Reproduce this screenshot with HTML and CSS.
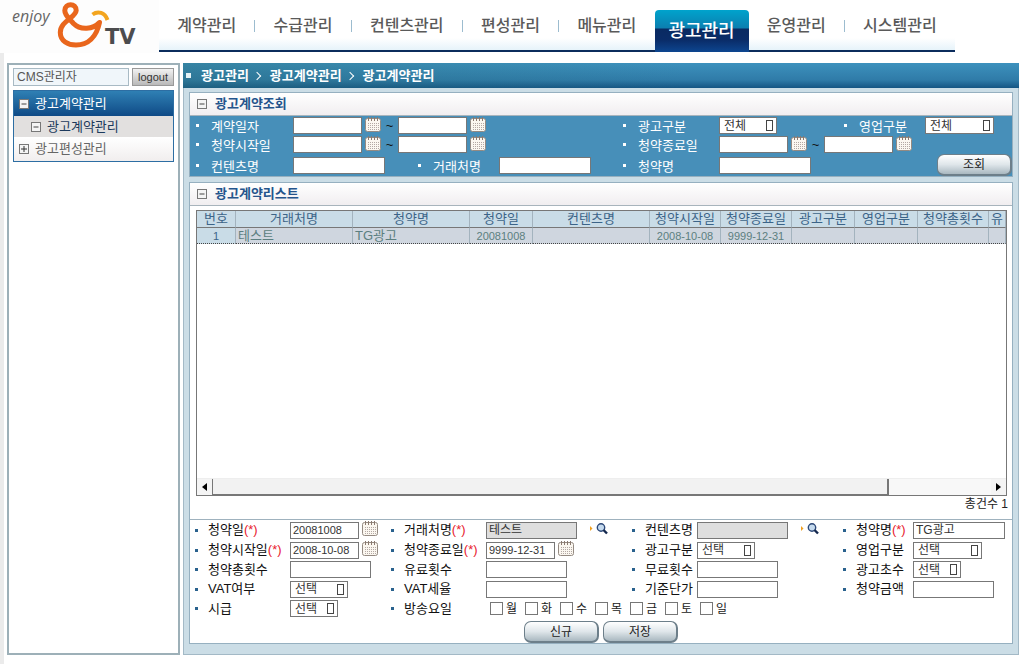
FILE: index.html
```html
<!DOCTYPE html>
<html lang="ko">
<head>
<meta charset="utf-8">
<title>광고계약관리</title>
<link rel="stylesheet" href="styles.css">
</head>
<body>
<svg class="defs" aria-hidden="true">
  <symbol id="cal" viewBox="0 0 16 15">
    <rect x=".5" y="1.5" width="15" height="13" rx="2" fill="#fbf7f0" stroke="#948a82"/>
    <path d="M3.5 0v4M6.5 0v4M9.5 0v4M12.500 0v4" stroke="#8a7a70" stroke-width="1"/>
    <path d="M3 6.500h11M3 8.500h11M3 10.500h11M3 12.500h11" stroke="#b3a8a4" stroke-width="1" stroke-dasharray="1 1"/>
  </symbol>
  <symbol id="find" viewBox="0 0 18 12">
    <path d="M0 3l2.500 2.500L0 8z" fill="#f0a020"/>
    <circle cx="11" cy="4.500" r="3.700" fill="#c5daee" stroke="#2c4878" stroke-width="1.400"/>
    <path d="M13.500 7l3.500 3.500" stroke="#14284e" stroke-width="2.400"/>
  </symbol>
  <symbol id="minus" viewBox="0 0 10 10">
    <rect x=".5" y=".5" width="9" height="9" fill="#f4f4f4" stroke="#777"/>
    <path d="M2.500 5h5" stroke="#444"/>
  </symbol>
  <symbol id="plus" viewBox="0 0 10 10">
    <rect x=".5" y=".5" width="9" height="9" fill="#f4f4f4" stroke="#777"/>
    <path d="M2 5h6M5 2v6" stroke="#333"/>
  </symbol>
</svg>

<header class="top">
  <a class="logo" href="#" aria-label="enjoy &amp;TV">
    <svg width="150" height="52" viewBox="0 0 150 52">
      <text class="logo-enjoy" x="12" y="22">enjoy</text>
      <path d="M64.800 10.500C65 2.800 76.300 2.800 76.200 10.500C75.500 18 60.300 21 60.300 32.500C60.300 41 68 45 76 45C88 45 96.500 37 99.500 22.500C93 29.500 80.500 30.500 73.500 23.500C69 18.500 64.600 15 64.800 10.500Z" fill="none" stroke="#e9661c" stroke-width="5" stroke-linejoin="round"/>
      <path d="M92.500 14.500C98 10.500 105 12.500 107.500 20" fill="none" stroke="#f3a51f" stroke-width="4"/>
      <text class="logo-tv" x="105" y="44">TV</text>
    </svg>
  </a>
  <nav class="menu">
    <ul>
      <li><a href="#">계약관리</a></li>
      <li class="sep"><a href="#">수급관리</a></li>
      <li class="sep"><a href="#">컨텐츠관리</a></li>
      <li class="sep"><a href="#">편성관리</a></li>
      <li class="sep"><a href="#">메뉴관리</a></li>
      <li class="on"><a href="#">광고관리</a></li>
      <li><a href="#">운영관리</a></li>
      <li class="sep"><a href="#">시스템관리</a></li>
    </ul>
  </nav>
</header>

<div class="page">
  <aside class="side">
    <div class="user">
      <input type="text" value="CMS관리자" aria-label="사용자" readonly>
      <button type="button">logout</button>
    </div>
    <ul class="tree">
      <li class="group"><a href="#"><svg><use href="#minus"/></svg>광고계약관리</a></li>
      <li class="current"><a href="#"><svg><use href="#minus"/></svg>광고계약관리</a></li>
      <li class="closed"><a href="#"><svg><use href="#plus"/></svg>광고편성관리</a></li>
    </ul>
  </aside>

  <main class="main">
    <h1 class="crumb"><span>광고관리</span><i></i><span>광고계약관리</span><i></i><span>광고계약관리</span></h1>
    <div class="frame">
      <section class="panel">
        <h2><svg><use href="#minus"/></svg>광고계약조회</h2>
        <form class="search">
          <label for="s1">계약일자</label>
          <div class="ctl w3"><input class="date" id="s1" type="text"><button class="cal" type="button" aria-label="달력"><svg><use href="#cal"/></svg></button><span>~</span><input class="date" type="text" aria-label="계약일자 끝"><button class="cal" type="button" aria-label="달력"><svg><use href="#cal"/></svg></button></div>
          <label for="s2">광고구분</label>
          <div class="ctl"><select id="s2" class="m"><option>전체</option></select></div>
          <label for="s3">영업구분</label>
          <div class="ctl"><select id="s3" class="l"><option>전체</option></select></div>

          <label for="s4">청약시작일</label>
          <div class="ctl w3"><input class="date" id="s4" type="text"><button class="cal" type="button" aria-label="달력"><svg><use href="#cal"/></svg></button><span>~</span><input class="date" type="text" aria-label="청약시작일 끝"><button class="cal" type="button" aria-label="달력"><svg><use href="#cal"/></svg></button></div>
          <label for="s5">청약종료일</label>
          <div class="ctl w3"><input class="date" id="s5" type="text"><button class="cal" type="button" aria-label="달력"><svg><use href="#cal"/></svg></button><span>~</span><input class="date" type="text" aria-label="청약종료일 끝"><button class="cal" type="button" aria-label="달력"><svg><use href="#cal"/></svg></button></div>

          <label for="s6">컨텐츠명</label>
          <div class="ctl"><input class="name" id="s6" type="text"></div>
          <label for="s7">거래처명</label>
          <div class="ctl"><input class="name" id="s7" type="text"></div>
          <label for="s8">청약명</label>
          <div class="ctl"><input class="name" id="s8" type="text"></div>
          <div class="ctl w2 end"><button class="btn" type="button">조회</button></div>
        </form>
      </section>

      <section class="panel list">
        <h2><svg><use href="#minus"/></svg>광고계약리스트</h2>
        <div class="grid">
          <div class="rows">
            <table>
              <colgroup><col class="c-no"><col class="c-name"><col class="c-name"><col class="c-code"><col class="c-name"><col class="c-date"><col class="c-date"><col class="c-code"><col class="c-code"><col class="c-date"><col class="c-cut"></colgroup>
              <thead><tr><th>번호</th><th>거래처명</th><th>청약명</th><th>청약일</th><th>컨텐츠명</th><th>청약시작일</th><th>청약종료일</th><th>광고구분</th><th>영업구분</th><th>청약총횟수</th><th>유</th></tr></thead>
              <tbody><tr><td class="no">1</td><td class="txt">테스트</td><td class="txt">TG광고</td><td>20081008</td><td></td><td>2008-10-08</td><td>9999-12-31</td><td></td><td></td><td></td><td></td></tr></tbody>
            </table>
          </div>
          <div class="hbar">
            <button type="button" aria-label="왼쪽"><svg viewBox="0 0 5 8"><path d="M5 0v8L0 4z"/></svg></button>
            <div class="thumb"></div><div class="track"></div>
            <button type="button" aria-label="오른쪽"><svg viewBox="0 0 5 8"><path d="M0 0v8l5-4z"/></svg></button>
          </div>
        </div>
        <p class="total">총건수 1</p>

        <form class="detail">
          <label for="d1"><span>청약일<em>(*)</em></span></label>
          <div class="ctl"><input class="date" id="d1" type="text" value="20081008"><button class="cal" type="button" aria-label="달력"><svg><use href="#cal"/></svg></button></div>
          <label for="d2"><span>거래처명<em>(*)</em></span></label>
          <div class="ctl"><input class="name off" id="d2" type="text" value="테스트" readonly><button class="find" type="button" aria-label="찾기"><svg><use href="#find"/></svg></button></div>
          <label for="d3">컨텐츠명</label>
          <div class="ctl"><input class="name off" id="d3" type="text" readonly><button class="find" type="button" aria-label="찾기"><svg><use href="#find"/></svg></button></div>
          <label for="d4"><span>청약명<em>(*)</em></span></label>
          <div class="ctl"><input class="name ko" id="d4" type="text" value="TG광고"></div>

          <label for="d5"><span>청약시작일<em>(*)</em></span></label>
          <div class="ctl"><input class="date" id="d5" type="text" value="2008-10-08"><button class="cal" type="button" aria-label="달력"><svg><use href="#cal"/></svg></button></div>
          <label for="d6"><span>청약종료일<em>(*)</em></span></label>
          <div class="ctl"><input class="date" id="d6" type="text" value="9999-12-31"><button class="cal" type="button" aria-label="달력"><svg><use href="#cal"/></svg></button></div>
          <label for="d7">광고구분</label>
          <div class="ctl"><select id="d7" class="m"><option>선택</option></select></div>
          <label for="d8">영업구분</label>
          <div class="ctl"><select id="d8" class="l"><option>선택</option></select></div>

          <label for="d9">청약총횟수</label>
          <div class="ctl"><input class="num" id="d9" type="text"></div>
          <label for="d10">유료횟수</label>
          <div class="ctl"><input class="num" id="d10" type="text"></div>
          <label for="d11">무료횟수</label>
          <div class="ctl"><input class="num" id="d11" type="text"></div>
          <label for="d12">광고초수</label>
          <div class="ctl"><select id="d12" class="s"><option>선택</option></select></div>

          <label for="d13">VAT여부</label>
          <div class="ctl"><select id="d13" class="m"><option>선택</option></select></div>
          <label for="d14">VAT세율</label>
          <div class="ctl"><input class="num" id="d14" type="text"></div>
          <label for="d15">기준단가</label>
          <div class="ctl"><input class="num" id="d15" type="text"></div>
          <label for="d16">청약금액</label>
          <div class="ctl"><input class="num" id="d16" type="text"></div>

          <label for="d17">시급</label>
          <div class="ctl"><select id="d17" class="s"><option>선택</option></select></div>
          <label for="mon">방송요일</label>
          <div class="ctl days">
            <label><input type="checkbox" id="mon">월</label>
            <label><input type="checkbox">화</label>
            <label><input type="checkbox">수</label>
            <label><input type="checkbox">목</label>
            <label><input type="checkbox">금</label>
            <label><input type="checkbox">토</label>
            <label><input type="checkbox">일</label>
          </div>
        </form>
        <div class="actions"><button class="btn" type="button">신규</button><button class="btn" type="button">저장</button></div>
      </section>
    </div>
  </main>
</div>
</body>
</html>
```
FILE: styles.css
```css
* { box-sizing: border-box; }
body, ul, h1, h2, p { margin: 0; padding: 0; }
ul { list-style: none; }
a { color: inherit; text-decoration: none; }
body {
  min-height: 100vh;
  display: flex;
  flex-direction: column;
  background: #fff;
  color: #222;
  font: 13px/18px "Liberation Sans", "Noto Sans CJK KR", sans-serif;
}
button, input, select { font: inherit; color: inherit; margin: 0; border-radius: 0; }
button { padding: 0; border: 0; background: none; }
svg { display: block; flex: none; }
.defs { width: 0; height: 0; position: absolute; }

/* Header */
.top { display: flex; height: 53px; }
.logo { width: 159px; background: #fdfdfd; }
.logo-enjoy { font: italic 16px "Open Sans", sans-serif; fill: #666; }
.logo-tv { font: bold 21px "DejaVu Sans", sans-serif; fill: #4c4c4e; }
.menu {
  flex: 1;
  margin-right: 69px;
  border-bottom: 2px solid #0b2c5c;
  margin-bottom: 1px;
  background: linear-gradient(#fff 38px, #e6f3fa);
}
.menu ul { display: flex; height: 52px; }
.menu li { flex: 1 1 auto; display: flex; align-items: center; }
.menu a { flex: 1; text-align: center; font-size: 16px; font-weight: 500; line-height: 52px; color: #5a5a5a; }
.menu .sep::before { content: ""; width: 1px; height: 12px; background: #9cbccf; }
.menu .on {
  flex: 0 0 94px;
  height: 42px;
  margin-top: 10px;
  border-radius: 4px 4px 0 0;
  background: linear-gradient(#00a3cc, #0c7fb0 18px, #0a2a62 19px, #0a2c68 30px, #0d4690);
}
.menu .on a { font-size: 18px; line-height: 38px; color: #fff; }

/* Page columns */
.page { flex: 1; display: flex; gap: 3px; padding: 10px 5px 9px 3px; border-left: 4px solid #ebebeb; }
.side { flex: 0 0 173px; min-width: 0; padding: 3px 4px; border: 2px solid #9db0b8; background: #fff; }
.user { display: flex; gap: 3px; padding-bottom: 4px; }
.user input { flex: 1; width: 0; min-width: 0; height: 18px; padding: 0 3px; border: 1px solid #a8bac4; background: #f0f6fa; font-size: 12px; color: #555; }
.user button { width: 42px; height: 18px; border: 1px solid #999; background: linear-gradient(#f2f2f2, #b9b9b9); font-size: 11px; line-height: 14px; color: #333; }
.tree { border: 1px solid #2d6ea3; }
.tree a { display: flex; align-items: center; gap: 6px; padding-left: 5px; height: 22px; }
.tree svg { width: 10px; height: 10px; }
.group a { height: 25px; color: #fff; background: linear-gradient(#2f80b4, #0f4a86); }
.current a { height: 21px; padding-left: 17px; color: #1c3a5c; background: #e2e0df; }
.closed a { height: 24px; color: #666; background: linear-gradient(#fff, #f1eeee); }

.main { flex: 1; min-width: 0; display: flex; flex-direction: column; }
.crumb {
  display: flex;
  align-items: center;
  height: 25px;
  padding-left: 3px;
  font-size: 13px;
  color: #fff;
  background: linear-gradient(90deg, #2b6f7c66, #2b6f7c00 60%), linear-gradient(#3d91bd, #2f7ba8 17px, #155583);
}
.crumb::before { content: ""; width: 5px; height: 5px; margin-right: 10px; background: #e4f2f6; }
.crumb i { width: 6px; height: 6px; margin: 0 10px 0 5px; border: solid #fff; border-width: 1px 1px 0 0; transform: rotate(45deg); }
.frame {
  flex: 1;
  display: flex;
  flex-direction: column;
  gap: 5px;
  padding: 4px 5px 10px;
  border: 1px solid #a3b9c6;
  border-top: 0;
  background: #cbdde6;
}
.panel { border: 1px solid #96b0c0; background: #fff; }
.panel h2 {
  display: flex;
  align-items: center;
  gap: 8px;
  height: 23px;
  padding-left: 7px;
  border-bottom: 1px solid #a8b4bc;
  font-size: 13px;
  color: #24548c;
  background: linear-gradient(#fff, #f1eef0);
}
.panel h2 svg { width: 10px; height: 10px; }

/* Shared controls */
.search label, .detail > label { display: flex; align-items: center; white-space: nowrap; }
.search label::before, .detail > label::before { content: ""; flex: none; width: 3px; height: 3px; }
.ctl { display: flex; align-items: center; min-width: 0; }
.w2 { grid-column: span 2; }
.w3 { grid-column: span 3; }
.ctl input[type="text"], select { height: 17px; border: 1px solid #777; background-color: #fff; padding: 0 2px; font-size: 11px; color: #333; flex: none; }
.ctl .date { width: 69px; }
.ctl .name { width: 92px; }
.ctl .num { width: 81px; }
.detail .ctl .off { width: 91px; background: #dedede; }
.detail .ctl .off, .detail .ctl .ko { font-size: 12px; }
.cal { margin-left: 3px; padding-bottom: 3px; }
.cal svg { width: 16px; height: 15px; }
.find { margin-left: 13px; padding-bottom: 3px; }
.find svg { width: 18px; height: 12px; }
select {
  appearance: none;
  background-image: linear-gradient(#fff, #fff), linear-gradient(#444, #444);
  background-size: 5px 9px, 7px 11px;
  background-position: right 4px center, right 3px center;
  background-repeat: no-repeat;
}
.ctl select { padding: 0 4px; font-size: 12px; line-height: 14px; }
select.s { width: 48px; }
select.m { width: 58px; }
select.l { width: 69px; }
.btn {
  width: 75px;
  height: 22px;
  border: 1px solid #6d7f8a;
  border-width: 1px 2px 2px 1px;
  border-radius: 7px;
  background: linear-gradient(#fff, #dfe6ea 50%, #a9b8c0);
  color: #222;
  font-size: 12px;
  line-height: 18px;
}

/* Search */
.search {
  display: grid;
  grid-template-columns: 103px minmax(0, 119fr) 87px minmax(0, 118fr) 102px minmax(0, 119fr) 87px minmax(0, 87fr);
  grid-template-rows: 19px 19px 22px;
  background: #478fb9;
  color: #fff;
}
.search label { padding: 3px 0 0 6px; gap: 12px; }
.search label::before { background: #fff; margin-bottom: 3px; }
.search .ctl span { width: 17px; text-align: center; color: #111; }
.end { justify-content: flex-end; }

/* List */
.list { flex: 1; display: flex; flex-direction: column; }
.grid { flex: 1; display: flex; flex-direction: column; margin: 4px 5px 0 6px; border: 1px solid #777; }
.rows { flex: 1; overflow: hidden; }
table { width: 100%; table-layout: fixed; border-collapse: separate; border-spacing: 0; }
.c-no { width: 39px; }
.c-name { width: 117px; }
.c-code { width: 63px; }
.c-date { width: 71px; }
th, td { padding: 0; height: 17px; line-height: 16px; white-space: nowrap; text-align: center; border-right: 1px solid #a3b3be; }
th { font-weight: 400; color: #3c6488; background: #c9dce7; border-bottom: 1px solid #777; }
td { height: 16px; line-height: 14px; font-size: 11px; color: #5c7f80; background: #cfd6df; border-bottom: 1px dotted #444; }
td.no { color: #3c6488; background: #c9dce7; }
td.txt { text-align: left; padding-left: 2px; font-size: 13px; }
.hbar { display: flex; height: 17px; background: #f8f8f8; border-top: 1px solid #eee; }
.hbar button { width: 15px; display: flex; align-items: center; justify-content: center; background: #f4f4f4; }
.hbar svg { width: 5px; height: 8px; }
.thumb { flex: 677; border: solid #777; border-width: 0 2px 1px 1px; background: #f2f2f2; }
.track { flex: 103; }
.total { padding: 1px 4px 0 0; line-height: 14px; height: 23px; text-align: right; font-size: 12px; }

/* Detail */
.detail {
  display: grid;
  grid-template-columns: 100px minmax(0, 96fr) 100px minmax(0, 141fr) 70px minmax(0, 141fr) 75px minmax(0, 99fr);
  grid-template-rows: 20px 20px 19px 20px 19px;
  border-top: 1px solid #9fb2be;
}
.detail > label { padding-left: 5px; gap: 10px; color: #111; }
.detail > label::before { background: #2a628e; }
.detail em { font-style: normal; color: #e8202c; }
.days { grid-column: span 5; padding-left: 4px; }
.days label { display: flex; align-items: center; gap: 3px; width: 35px; font-size: 12px; }
.days input { appearance: none; width: 13px; height: 13px; border: 1px solid #777; background: #fff; }
.actions { display: flex; justify-content: center; gap: 4px; padding-top: 3px; }
```
